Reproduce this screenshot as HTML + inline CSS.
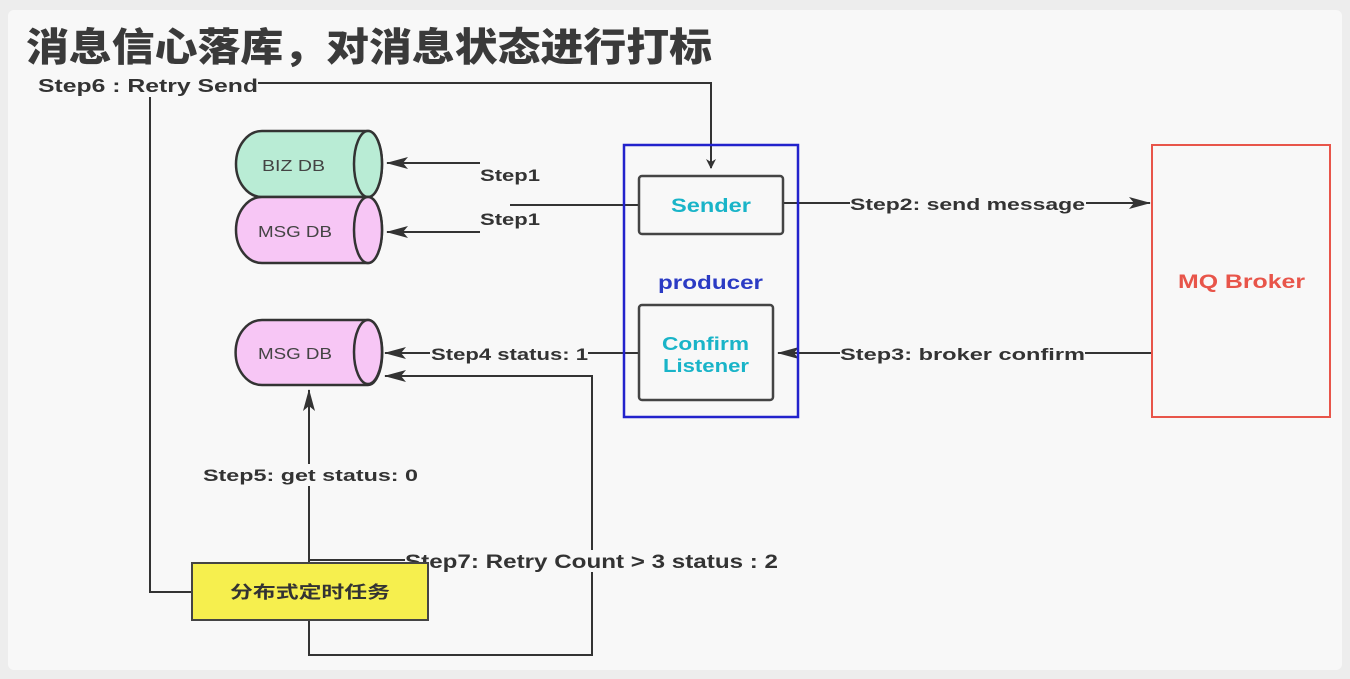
<!DOCTYPE html>
<html><head><meta charset="utf-8"><style>
html,body{margin:0;padding:0;background:#ededed;}
svg{display:block}
text{font-family:"Liberation Sans","Noto Sans CJK SC",sans-serif;font-weight:bold;fill:#333}
</style></head><body>
<svg width="1350" height="679" viewBox="0 0 1350 679">
<defs><marker id="a" markerWidth="10" markerHeight="10" refX="9" refY="5" orient="auto" markerUnits="userSpaceOnUse"><path d="M0,0 L10,5 L0,10 L3,5 Z" fill="#333"/></marker>
<marker id="b" markerWidth="22" markerHeight="14" refX="21" refY="7" orient="auto" markerUnits="userSpaceOnUse"><path d="M0,1 L22,7 L0,13 L5,7 Z" fill="#333"/></marker></defs>
<rect x="8" y="10" width="1334" height="660" rx="6" fill="#f8f8f8"/>
<text x="26" y="61" font-size="39" textLength="686" lengthAdjust="spacingAndGlyphs" style="fill:#3a3a3a;font-family:'Noto Sans CJK SC',sans-serif;font-weight:900">消息信心落库，对消息状态进行打标</text>
<text x="38" y="92" font-size="18" textLength="220" lengthAdjust="spacingAndGlyphs">Step6 :  Retry Send</text>
<g stroke="#333" stroke-width="2" fill="none">
<path d="M258,83 H711 V168" marker-end="url(#a)"/>
<path d="M150,97 V592 H192"/>
<path d="M480,163 H387" marker-end="url(#b)"/>
<path d="M480,232 H387" marker-end="url(#b)"/>
<path d="M510,205 H639"/>
<path d="M783,203 H1150" marker-end="url(#b)"/>
<path d="M639,353 H385" marker-end="url(#b)"/>
<path d="M1152,353 H778" marker-end="url(#b)"/>
<path d="M309,563 V390" marker-end="url(#b)"/>
<path d="M309,560 H405"/>
<path d="M309,620 V655 H592 V376 H385" marker-end="url(#b)"/>
</g>
<g stroke="#333" stroke-width="2.5">
<path d="M262,131 H368 A14,33 0 0 1 368,197 H262 A26,33 0 0 1 262,131 Z" fill="#b9ecd5"/>
<ellipse cx="368" cy="164" rx="14" ry="33" fill="#b9ecd5"/>
<path d="M262,197 H368 A14,33 0 0 1 368,263 H262 A26,33 0 0 1 262,197 Z" fill="#f7c6f5"/>
<ellipse cx="368" cy="230" rx="14" ry="33" fill="#f7c6f5"/>
<path d="M262,320 H368 A14,32 0 0 1 368,385 H262 A26,32 0 0 1 262,320 Z" fill="#f7c6f5"/>
<ellipse cx="368" cy="352" rx="14" ry="32" fill="#f7c6f5"/>
</g>
<text x="262" y="171" font-size="16" textLength="63" lengthAdjust="spacingAndGlyphs" style="font-weight:normal;fill:#444">BIZ DB</text>
<text x="258" y="237" font-size="16" textLength="74" lengthAdjust="spacingAndGlyphs" style="font-weight:normal;fill:#444">MSG DB</text>
<text x="258" y="359" font-size="16" textLength="74" lengthAdjust="spacingAndGlyphs" style="font-weight:normal;fill:#444">MSG DB</text>
<text x="480" y="181" font-size="17" textLength="60" lengthAdjust="spacingAndGlyphs">Step1</text>
<text x="480" y="225" font-size="17" textLength="60" lengthAdjust="spacingAndGlyphs">Step1</text>
<rect x="624" y="145" width="174" height="272" fill="none" stroke="#2222cc" stroke-width="2.5"/>
<rect x="639" y="176" width="144" height="58" rx="3" fill="#f8f8f8" stroke="#444" stroke-width="2.5"/>
<text x="671" y="212" font-size="19" textLength="80" lengthAdjust="spacingAndGlyphs" style="fill:#19b4c8">Sender</text>
<text x="658" y="289" font-size="19" textLength="105" lengthAdjust="spacingAndGlyphs" style="fill:#2b3bc4">producer</text>
<rect x="639" y="305" width="134" height="95" rx="3" fill="#f8f8f8" stroke="#444" stroke-width="2.5"/>
<text x="662" y="350" font-size="18" textLength="87" lengthAdjust="spacingAndGlyphs" style="fill:#19b4c8">Confirm</text>
<text x="663" y="372" font-size="18" textLength="86" lengthAdjust="spacingAndGlyphs" style="fill:#19b4c8">Listener</text>
<rect x="1152" y="145" width="178" height="272" fill="none" stroke="#e8554a" stroke-width="2"/>
<text x="1178" y="288" font-size="19" textLength="127" lengthAdjust="spacingAndGlyphs" style="fill:#e8554a">MQ Broker</text>
<rect x="850" y="193" width="236" height="20" fill="#f8f8f8"/>
<text x="850" y="210" font-size="17" textLength="235" lengthAdjust="spacingAndGlyphs">Step2:  send message</text>
<rect x="840" y="343" width="245" height="20" fill="#f8f8f8"/>
<text x="840" y="360" font-size="17" textLength="245" lengthAdjust="spacingAndGlyphs">Step3:  broker confirm</text>
<rect x="430" y="343" width="158" height="20" fill="#f8f8f8"/>
<text x="431" y="360" font-size="17" textLength="157" lengthAdjust="spacingAndGlyphs">Step4 status: 1</text>
<rect x="202" y="464" width="218" height="22" fill="#f8f8f8"/>
<text x="203" y="481" font-size="17" textLength="215" lengthAdjust="spacingAndGlyphs">Step5: get status:  0</text>
<rect x="405" y="550" width="376" height="22" fill="#f8f8f8"/>
<text x="405" y="568" font-size="19" textLength="373" lengthAdjust="spacingAndGlyphs">Step7: Retry Count &gt; 3 status : 2</text>
<rect x="192" y="563" width="236" height="57" fill="#f6ef4e" stroke="#444" stroke-width="2"/>
<text x="230" y="598" font-size="17" textLength="160" lengthAdjust="spacingAndGlyphs">分布式定时任务</text>
</svg>
</body></html>
